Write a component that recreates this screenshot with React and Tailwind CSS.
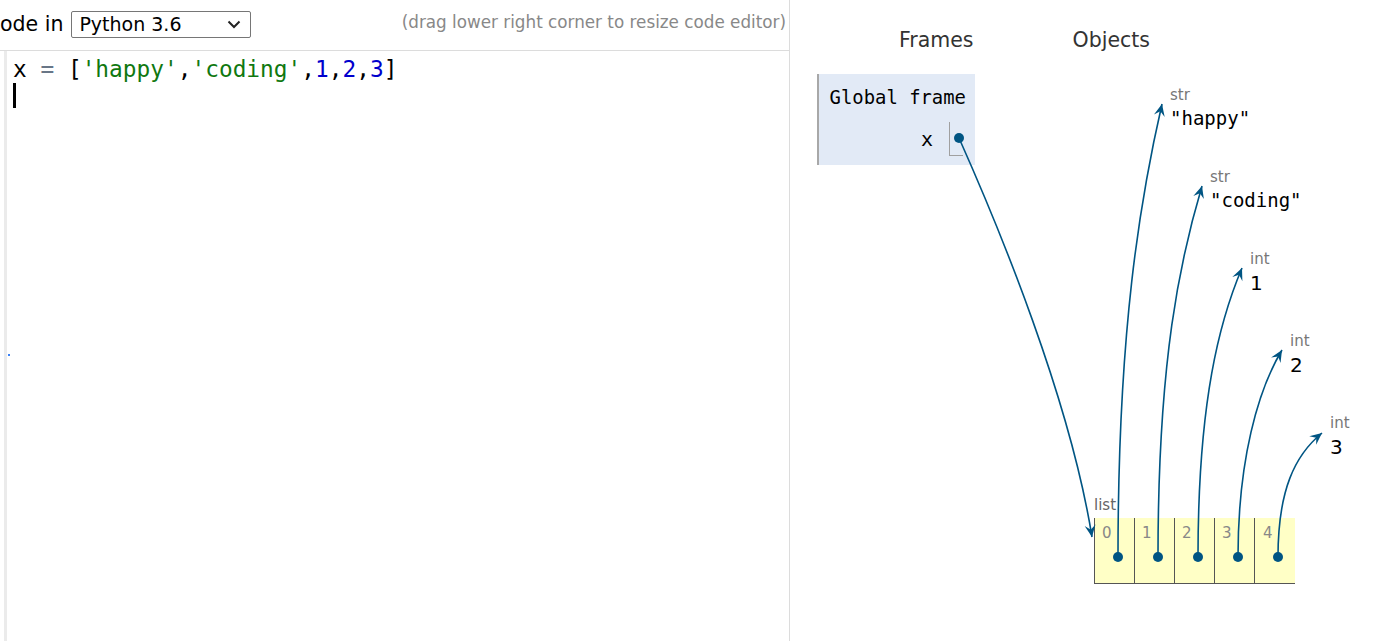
import React from 'react';

const ui = { fontFamily: '"DejaVu Sans", Verdana, sans-serif' };
const mono = { fontFamily: '"DejaVu Sans Mono", Consolas, monospace' };

// pointer curves, page coordinates: start, c1, c2, end
const arrows = [
  [[959, 138], [1000, 230], [1070, 400], [1092, 537]],
  [[1118, 557], [1118, 330], [1140, 200], [1162, 104]],
  [[1158, 557], [1158, 360], [1180, 260], [1202, 186]],
  [[1198, 557], [1198, 400], [1220, 320], [1242, 268]],
  [[1238, 557], [1238, 460], [1258, 390], [1282, 350]],
  [[1278, 557], [1278, 490], [1295, 455], [1322, 433]],
];

function head(c2, end) {
  const dx = end[0] - c2[0];
  const dy = end[1] - c2[1];
  const len = Math.hypot(dx, dy);
  const ux = dx / len, uy = dy / len;
  const nx = -uy, ny = ux;
  const L = 12, W = 11, fold = 0.62;
  const bx = end[0] - ux * L, by = end[1] - uy * L;
  const pts = [
    [end[0], end[1]],
    [bx + nx * W / 2, by + ny * W / 2],
    [end[0] - ux * L * fold, end[1] - uy * L * fold],
    [bx - nx * W / 2, by - ny * W / 2],
  ];
  return pts.map((p) => p.join(',')).join(' ');
}

function Pointers() {
  return (
    <svg className="absolute inset-0 pointer-events-none" width="1384" height="641">
      {arrows.map(([s, c1, c2, e], i) => (
        <g key={i}>
          <path d={`M${s[0]},${s[1]} C${c1[0]},${c1[1]} ${c2[0]},${c2[1]} ${e[0]},${e[1]}`} fill="none" stroke="#005583" strokeWidth="1.6" />
          <polygon points={head(c2, e)} fill="#005583" />
          <circle cx={s[0]} cy={s[1]} r="5" fill="#005583" />
        </g>
      ))}
    </svg>
  );
}

const heap = [
  { x: 1170, y: 85, type: 'str', val: '"happy"', mono: true },
  { x: 1210, y: 167, type: 'str', val: '"coding"', mono: true },
  { x: 1250, y: 249, type: 'int', val: '1' },
  { x: 1290, y: 331, type: 'int', val: '2' },
  { x: 1330, y: 413, type: 'int', val: '3' },
];

export default function App() {
  return (
    <div className="relative w-[1384px] h-[641px] overflow-hidden bg-white flex" style={ui}>
      {/* editor side */}
      <div className="w-[790px] flex flex-col border-r border-[#dcdcdc]">
        <div className="h-[50px] flex items-start pt-[11px] pr-[3px]">
          <span className="text-[20.5px] text-black leading-[26px] mr-[8px]">ode in</span>
          <div className="w-[180px] h-[27px] border border-[#767676] rounded-[2px] flex items-center justify-between pl-[7px] pr-[9px]">
            <span className="text-[19px] leading-none text-black">Python 3.6</span>
            <svg width="14" height="9" viewBox="0 0 14 9"><path d="M1.5 1.5 L7 7 L12.5 1.5" fill="none" stroke="#222" strokeWidth="2" /></svg>
          </div>
          <span className="ml-auto mt-[-1px] text-[16.8px] text-[#888]">(drag lower right corner to resize code editor)</span>
        </div>
        <div className="flex-1 flex border-t border-[#dcdcdc]">
          <div className="w-[4px]" />
          <div className="w-[3px] bg-[#ebebeb] relative">
            <div className="absolute left-[4px] top-[303px] w-[2px] h-[2px] bg-[#3b82f6]" />
          </div>
          <div className="pl-[6px] pt-[5px] text-[22.8px] leading-[26px]" style={mono}>
            <div className="whitespace-pre">
              <span className="text-black">x </span>
              <span className="text-[#687687]">=</span>
              <span className="text-black"> [</span>
              <span className="text-[#107810]">'happy'</span>
              <span className="text-black">,</span>
              <span className="text-[#107810]">'coding'</span>
              <span className="text-black">,</span>
              <span className="text-[#0000cd]">1</span>
              <span className="text-black">,</span>
              <span className="text-[#0000cd]">2</span>
              <span className="text-black">,</span>
              <span className="text-[#0000cd]">3</span>
              <span className="text-black">]</span>
            </div>
            <div className="h-[26px] flex items-center">
              <div className="w-[3px] h-[25px] bg-black" />
            </div>
          </div>
        </div>
      </div>

      {/* visualization side */}
      <div className="flex-1 relative">
        <div className="flex pt-[27px] text-[20.5px] leading-[26px] text-[#333]">
          <span className="ml-[109px]">Frames</span>
          <span className="ml-[99px]">Objects</span>
        </div>
        <div className="ml-[27px] mt-[21px] w-[158px] h-[91px] bg-[#e2eaf6] border-l-2 border-[#a8a8a8] flex flex-col items-end pr-[9px] pt-[11px]">
          <span className="text-[18.9px] leading-[24px] text-black" style={mono}>Global frame</span>
          <div className="flex items-center mt-[13px] mr-[3px]">
            <span className="text-[20px] text-black mr-[16px]" style={mono}>x</span>
            <div className="w-[14px] h-[34px] border-l border-b border-[#a0a0a0]" />
          </div>
        </div>
      </div>

      {/* heap objects */}
      {heap.map((h) => (
        <div key={h.val} className="absolute flex flex-col" style={{ left: h.x, top: h.y }}>
          <span className="text-[15px] leading-[20px] text-[#777]">{h.type}</span>
          <span className={h.mono ? 'text-[19px] leading-[26px] text-black' : 'text-[20px] leading-[28px] text-black'} style={h.mono ? mono : ui}>{h.val}</span>
        </div>
      ))}

      {/* list */}
      <div className="absolute left-[1094px] top-[495px] flex flex-col">
        <span className="text-[15px] leading-[20px] text-[#666]">list</span>
        <div className="mt-[3px] flex border-l border-b border-[#555] bg-[#ffffc6]">
          {[0, 1, 2, 3, 4].map((i) => (
            <div key={i} className={i < 4 ? 'w-[40px] h-[65px] border-r border-[#555] pl-[7px] pt-[3px]' : 'w-[40px] h-[65px] pl-[8px] pt-[3px]'}>
              <span className="text-[15px] leading-[20px] text-[#888]">{i}</span>
            </div>
          ))}
        </div>
      </div>

      <Pointers />
    </div>
  );
}
